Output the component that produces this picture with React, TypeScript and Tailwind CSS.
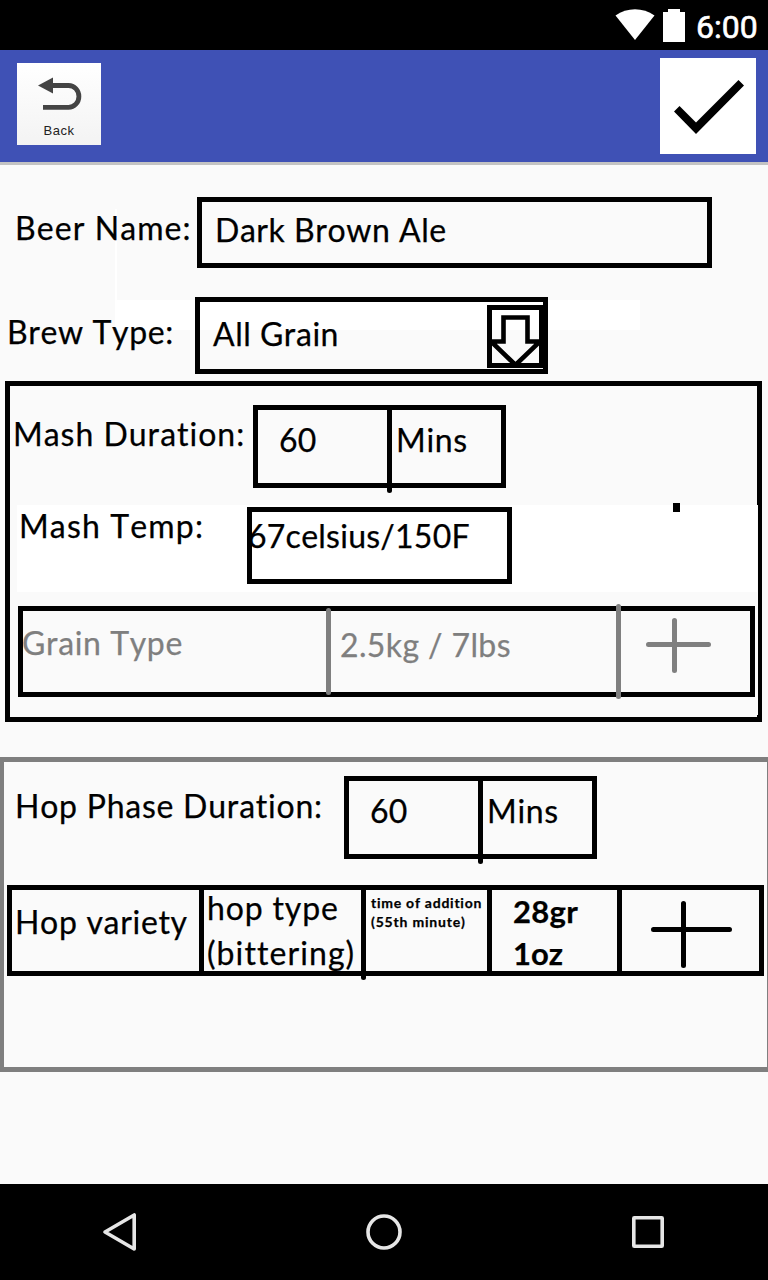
import type { ReactNode } from 'react';

function Label({ children, className = '' }: { children: ReactNode; className?: string }) {
  return <span className={`block shrink-0 whitespace-nowrap ${className}`}>{children}</span>;
}

function StatusBar() {
  return (
    <div className="flex h-[50px] items-start justify-end bg-black pr-[10px] text-white">
      <svg className="mt-[9px] h-[33px] w-[70px] shrink-0" viewBox="0 0 70 33" fill="#fff">
        <path d="M0.5 6.5C12 -2 28 -2 39.5 6.5L20 31Z" />
        <path d="M48 3h5V0h12v3h5v30H48Z" />
      </svg>
      <span className="ml-[11px] mt-[8px] w-[62px] whitespace-nowrap font-['Roboto',sans-serif] text-[32px] leading-[38px] [-webkit-text-stroke:0.6px_#fff]">
        6:00
      </span>
    </div>
  );
}

function Header() {
  return (
    <header className="flex h-[115px] items-start justify-between border-b-[3px] border-[#c3c3c3] bg-[#3f51b5] pl-[17px] pr-[12px]">
      <button className="mt-[13px] flex h-[82px] w-[84px] flex-col items-center bg-gradient-to-b from-white to-[#f3f3f3]">
        <svg className="h-[54px] w-[84px] shrink-0" viewBox="0 0 84 54">
          <path d="M34 22.500H51.500A10.400 10.900 0 0 1 51.500 44.300H26" fill="none" stroke="#444" strokeWidth="4.800" />
          <path d="M21 22.500L36 14.500V30.500Z" fill="#444" />
        </svg>
        <span className="mt-[6px] font-['Liberation_Sans',sans-serif] text-[13px] leading-[16px] tracking-[0.500px] text-[#222]">Back</span>
      </button>
      <button className="mt-[8px] h-24 w-24 bg-white">
        <svg className="size-full" viewBox="0 0 96 96">
          <path d="M14 53.500L19.500 48L36 64.500L78.500 22L84 27.500L36 76Z" />
        </svg>
      </button>
    </header>
  );
}

function DurationBox({ className }: { className: string }) {
  return (
    <div className={`flex h-[83px] w-[253px] shrink-0 border-5 border-black ${className}`}>
      <div className="w-[129px] pl-[21px] pt-[8px]">
        <Label className="tracking-[0.300px]">60</Label>
      </div>
      <div className="h-[83px] w-[5px] shrink-0 rounded-b-sm bg-black" />
      <Label className="pl-[4px] pt-[8px] tracking-[0.700px]">Mins</Label>
    </div>
  );
}

function MashPanel() {
  return (
    <section className="relative ml-[5px] mt-[7px] h-[341px] w-[757px] border-5 border-black">
      <div className="absolute left-[7px] top-[119px] h-[87px] w-[741px] bg-white" />
      <div className="absolute left-[747px] top-[119px] h-[210px] w-px bg-[#fafafa]" />
      <div className="absolute left-[663px] top-[117px] h-[9px] w-[7px] bg-black" />
      <div className="relative flex">
        <Label className="ml-[3px] mt-[26px] w-[240px] tracking-[0.980px]">Mash Duration:</Label>
        <DurationBox className="mt-[19px]" />
      </div>
      <div className="relative mt-[19px] flex">
        <Label className="ml-[9px] mt-[-3px] w-[228px] tracking-[1.150px]">Mash Temp:</Label>
        <div className="h-[77px] w-[265px] border-5 border-black">
          <Label className="ml-[-4px] mt-[2px] tracking-[0.250px]">67celsius/150F</Label>
        </div>
      </div>
      <div className="relative ml-[8px] mt-[22px] flex h-[91px] w-[737px] border-5 border-black text-[#7f7f7f]">
        <Label className="ml-[-1px] w-[304px] pt-[10px] tracking-[0.600px]">Grain Type</Label>
        <div className="mt-[-3px] h-[87px] w-[5px] shrink-0 rounded-full bg-[#7f7f7f]" />
        <Label className="w-[285px] pl-[9px] pt-[12px] tracking-[0.380px]">2.5kg / 7lbs</Label>
        <div className="mt-[-7px] h-[95px] w-[5px] shrink-0 rounded-full bg-[#7f7f7f]" />
        <svg className="ml-[25px] mt-[7px] h-[55px] w-[65px]" viewBox="0 0 65 55" stroke="#7f7f7f" strokeWidth="5" strokeLinecap="round">
          <path d="M2.500 26.500H62.500M28.500 2.500V52.500" />
        </svg>
      </div>
    </section>
  );
}

function HopPanel() {
  return (
    <section className="mt-[35px] h-[315px] w-full border-y-5 border-l-4 border-r border-[#7f7f7f]">
      <div className="flex pt-[14px]">
        <Label className="ml-[11px] mt-[8px] w-[329px] tracking-[0.750px]">Hop Phase Duration:</Label>
        <DurationBox className="" />
      </div>
      <div className="ml-[3px] mt-[26px] flex h-[91px] w-[757px] border-5 border-black">
        <Label className="w-[187px] pl-[3px] pt-[10px] tracking-[0.680px]">Hop variety</Label>
        <div className="w-[5px] shrink-0 bg-black" />
        <div className="w-[157px] shrink-0 pl-[3px]">
          <Label className="mt-[-4px] tracking-[0.850px]">hop type</Label>
          <Label className="mt-px tracking-[1.080px]">(bittering)</Label>
        </div>
        <div className="h-[90px] w-[5px] shrink-0 rounded-b-sm bg-black" />
        <div className="w-[121px] shrink-0 pl-[5px] pt-[3px] text-[14px] leading-[19px] font-bold">
          <Label className="tracking-[0.750px]">time of addition</Label>
          <Label className="tracking-[0.800px]">(55th minute)</Label>
        </div>
        <div className="w-[5px] shrink-0 bg-black" />
        <div className="w-[125px] shrink-0 pl-[21px] text-[31px] leading-[42px] font-bold">
          <Label className="tracking-[0.300px]">28gr</Label>
          <Label>1oz</Label>
        </div>
        <div className="w-[5px] shrink-0 bg-black" />
        <svg className="ml-[29px] mt-[11px] h-[67px] w-[81px]" viewBox="0 0 81 67" stroke="#000" strokeWidth="5" strokeLinecap="round">
          <path d="M2.500 28.500H78.500M32.500 2.500V64.500" />
        </svg>
      </div>
    </section>
  );
}

function NavBar() {
  return (
    <nav className="mt-auto flex h-24 items-center bg-black">
      <svg className="h-24 w-full" viewBox="0 0 768 96" fill="none" stroke="#e6e6e6" strokeWidth="3.600" strokeLinejoin="round">
        <path d="M105 48L134.200 31V65Z" />
        <circle cx="384" cy="48" r="16" />
        <rect x="633.800" y="33.800" width="28.400" height="28.400" rx="0.500" />
      </svg>
    </nav>
  );
}

export default function App() {
  return (
    <div className="flex h-[1280px] w-[768px] flex-col overflow-hidden bg-[#fafafa] font-['Lato','Liberation_Sans',sans-serif] text-[32px] leading-[44px] text-black [font-kerning:none] [font-variant-ligatures:none]">
      <StatusBar />
      <Header />
      <main className="relative [-webkit-text-stroke:0.25px_currentColor]">
        <div className="absolute left-[115px] top-[44px] h-[91px] w-[2px] bg-white" />
        <div className="absolute left-[115px] top-[135px] h-[30px] w-[525px] bg-white" />
        <div className="relative flex pt-[32px]">
          <Label className="ml-[15px] mt-[9px] w-[182px] tracking-[1.080px]">Beer Name:</Label>
          <div className="h-[71px] w-[515px] border-5 border-black pl-[13px] pt-[6px]">
            <Label className="tracking-[0.550px]">Dark Brown Ale</Label>
          </div>
        </div>
        <div className="relative mt-[29px] flex">
          <Label className="ml-[7px] mt-[13px] w-[188px] tracking-[0.600px]">Brew Type:</Label>
          <div className="flex h-[77px] w-[353px] border-5 border-black">
            <Label className="w-[287px] pl-[13px] pt-[10px] tracking-[0.500px]">All Grain</Label>
            <svg className="mt-[3px] h-[63px] w-[57px] shrink-0" viewBox="0 0 57 63" fill="none" stroke="#000" strokeWidth="5">
              <path d="M2.500 2.500H54.500V60.500H2.500Z" />
              <path d="M4 36.500H16.500V12.500H40.500V36.500H53L28.500 60Z" strokeWidth="4.600" />
            </svg>
          </div>
        </div>
        <MashPanel />
        <HopPanel />
      </main>
      <NavBar />
    </div>
  );
}
